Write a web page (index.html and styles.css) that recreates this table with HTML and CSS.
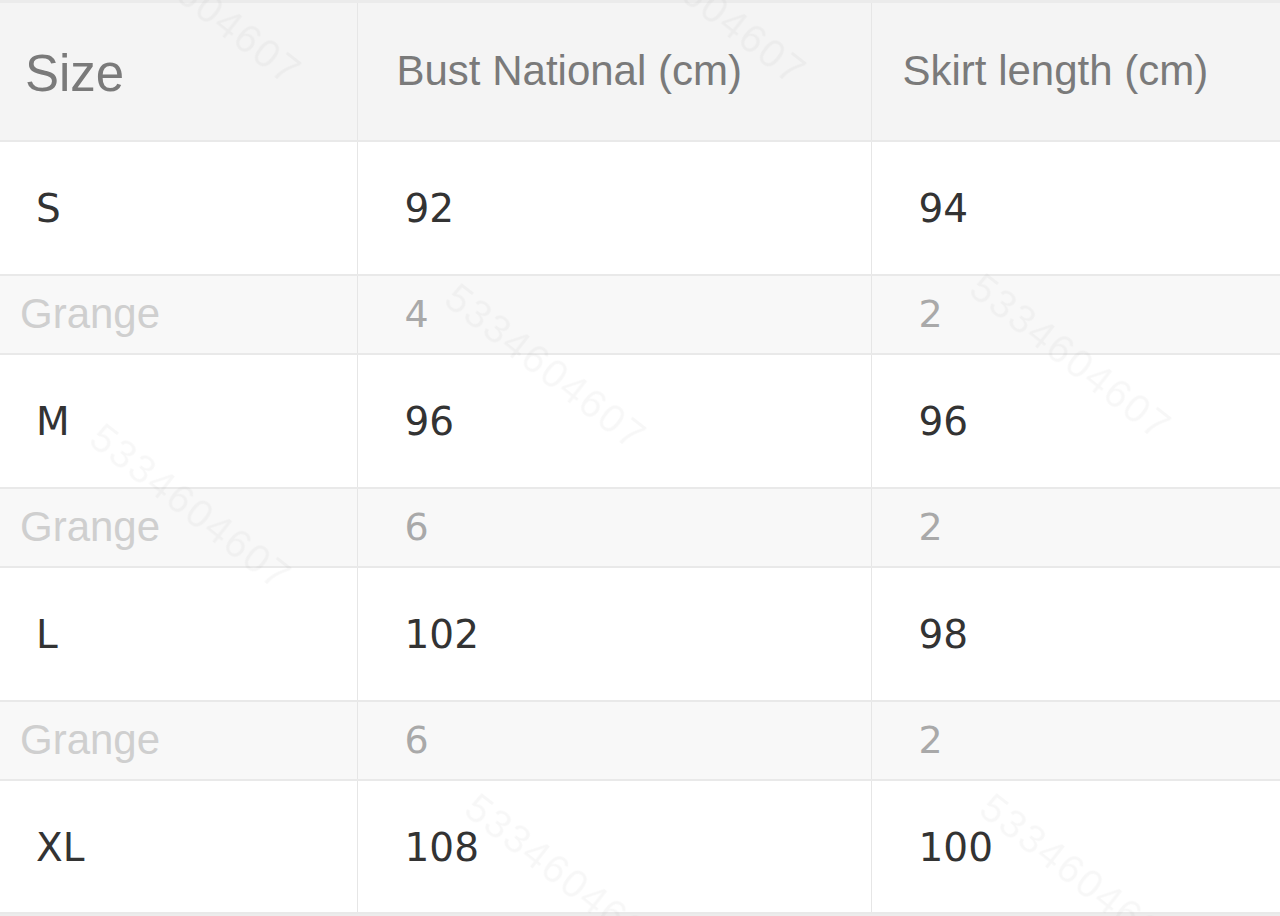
FILE: index.html
```html
<!DOCTYPE html>
<html lang="en">
<head>
<meta charset="utf-8">
<title>Size chart</title>
<link rel="stylesheet" href="styles.css">
</head>
<body>
<div class="page">
<table class="chart">
  <thead>
    <tr class="head">
      <th class="c1 size-h">Size</th>
      <th class="c2">Bust National (cm)</th>
      <th class="c3">Skirt length (cm)</th>
    </tr>
  </thead>
  <tbody>
    <tr class="main"><td class="c1">S</td><td class="c2">92</td><td class="c3">94</td></tr>
    <tr class="range"><td class="c1">Grange</td><td class="c2">4</td><td class="c3">2</td></tr>
    <tr class="main"><td class="c1">M</td><td class="c2">96</td><td class="c3">96</td></tr>
    <tr class="range"><td class="c1">Grange</td><td class="c2">6</td><td class="c3">2</td></tr>
    <tr class="main"><td class="c1">L</td><td class="c2">102</td><td class="c3">98</td></tr>
    <tr class="range"><td class="c1">Grange</td><td class="c2">6</td><td class="c3">2</td></tr>
    <tr class="main last"><td class="c1">XL</td><td class="c2">108</td><td class="c3">100</td></tr>
  </tbody>
</table>
<div class="watermarks" aria-hidden="true">
  <span class="wm wm1">5334604607</span>
  <span class="wm wm2">5334604607</span>
  <span class="wm wm3">5334604607</span>
  <span class="wm wm4">5334604607</span>
  <span class="wm wm5">5334604607</span>
  <span class="wm wm6">5334604607</span>
  <span class="wm wm7">5334604607</span>
</div>
</div>
</body>
</html>
```
FILE: styles.css
```css
html, body {
  margin: 0;
  padding: 0;
  background: #ececec;
  overflow: hidden;
}
.page {
  position: relative;
  width: 1280px;
  height: 916px;
  overflow: hidden;
}
.chart {
  width: 1280px;
  border-collapse: collapse;
  table-layout: fixed;
  border-top: 3px solid #ebebeb;
}
.chart th, .chart td {
  box-sizing: border-box;
  text-align: left;
  vertical-align: middle;
  padding: 0;
  border-left: 1px solid #e6e6e6;
  border-bottom: 2px solid #e9e9e9;
  white-space: nowrap;
}
.chart .c1 { width: 357px; border-left: none; }
.chart .c2 { width: 514px; }
.chart .c3 { width: auto; }

.head th {
  height: 139px;
  background: #f4f4f4;
  font-family: "Liberation Sans", Arial, sans-serif;
  font-weight: normal;
  font-size: 42px;
  color: #7a7a7a;
}
.head .size-h { font-size: 51px; padding-left: 25px; padding-top: 4px; }
.head .c2 { padding-left: 39px; }
.head .c3 { padding-left: 31px; }

.main td {
  height: 134px;
  background: #ffffff;
  font-family: "DejaVu Sans", Verdana, sans-serif;
  font-size: 39px;
  color: #333333;
  padding-top: 2px;
}
.main .c1 { padding-left: 36px; }
.main .c2, .main .c3 { padding-left: 47px; }
.main.last td { height: 133px; }

.range td {
  height: 79px;
  background: #f8f8f8;
  font-family: "DejaVu Sans", Verdana, sans-serif;
  font-size: 38px;
  color: #a9a9a9;
}
.range .c1 {
  font-family: "Liberation Sans", Arial, sans-serif;
  font-size: 42px;
  color: #cfcfcf;
  padding-left: 20px;
}
.range .c2, .range .c3 { padding-left: 47px; }

.watermarks {
  position: absolute;
  inset: 0;
  pointer-events: none;
}
.wm {
  position: absolute;
  font-family: "Liberation Sans", Arial, sans-serif;
  font-size: 40px;
  letter-spacing: 2px;
  color: rgba(0, 0, 0, 0.03);
  transform: rotate(38deg);
  transform-origin: left center;
  white-space: nowrap;
  filter: blur(0.6px);
}
.wm1 { left: 450px; top: 270px; }
.wm2 { left: 975px; top: 260px; }
.wm3 { left: 95px; top: 410px; }
.wm4 { left: 610px; top: -95px; }
.wm5 { left: 105px; top: -95px; }
.wm6 { left: 470px; top: 780px; }
.wm7 { left: 985px; top: 780px; }
```
